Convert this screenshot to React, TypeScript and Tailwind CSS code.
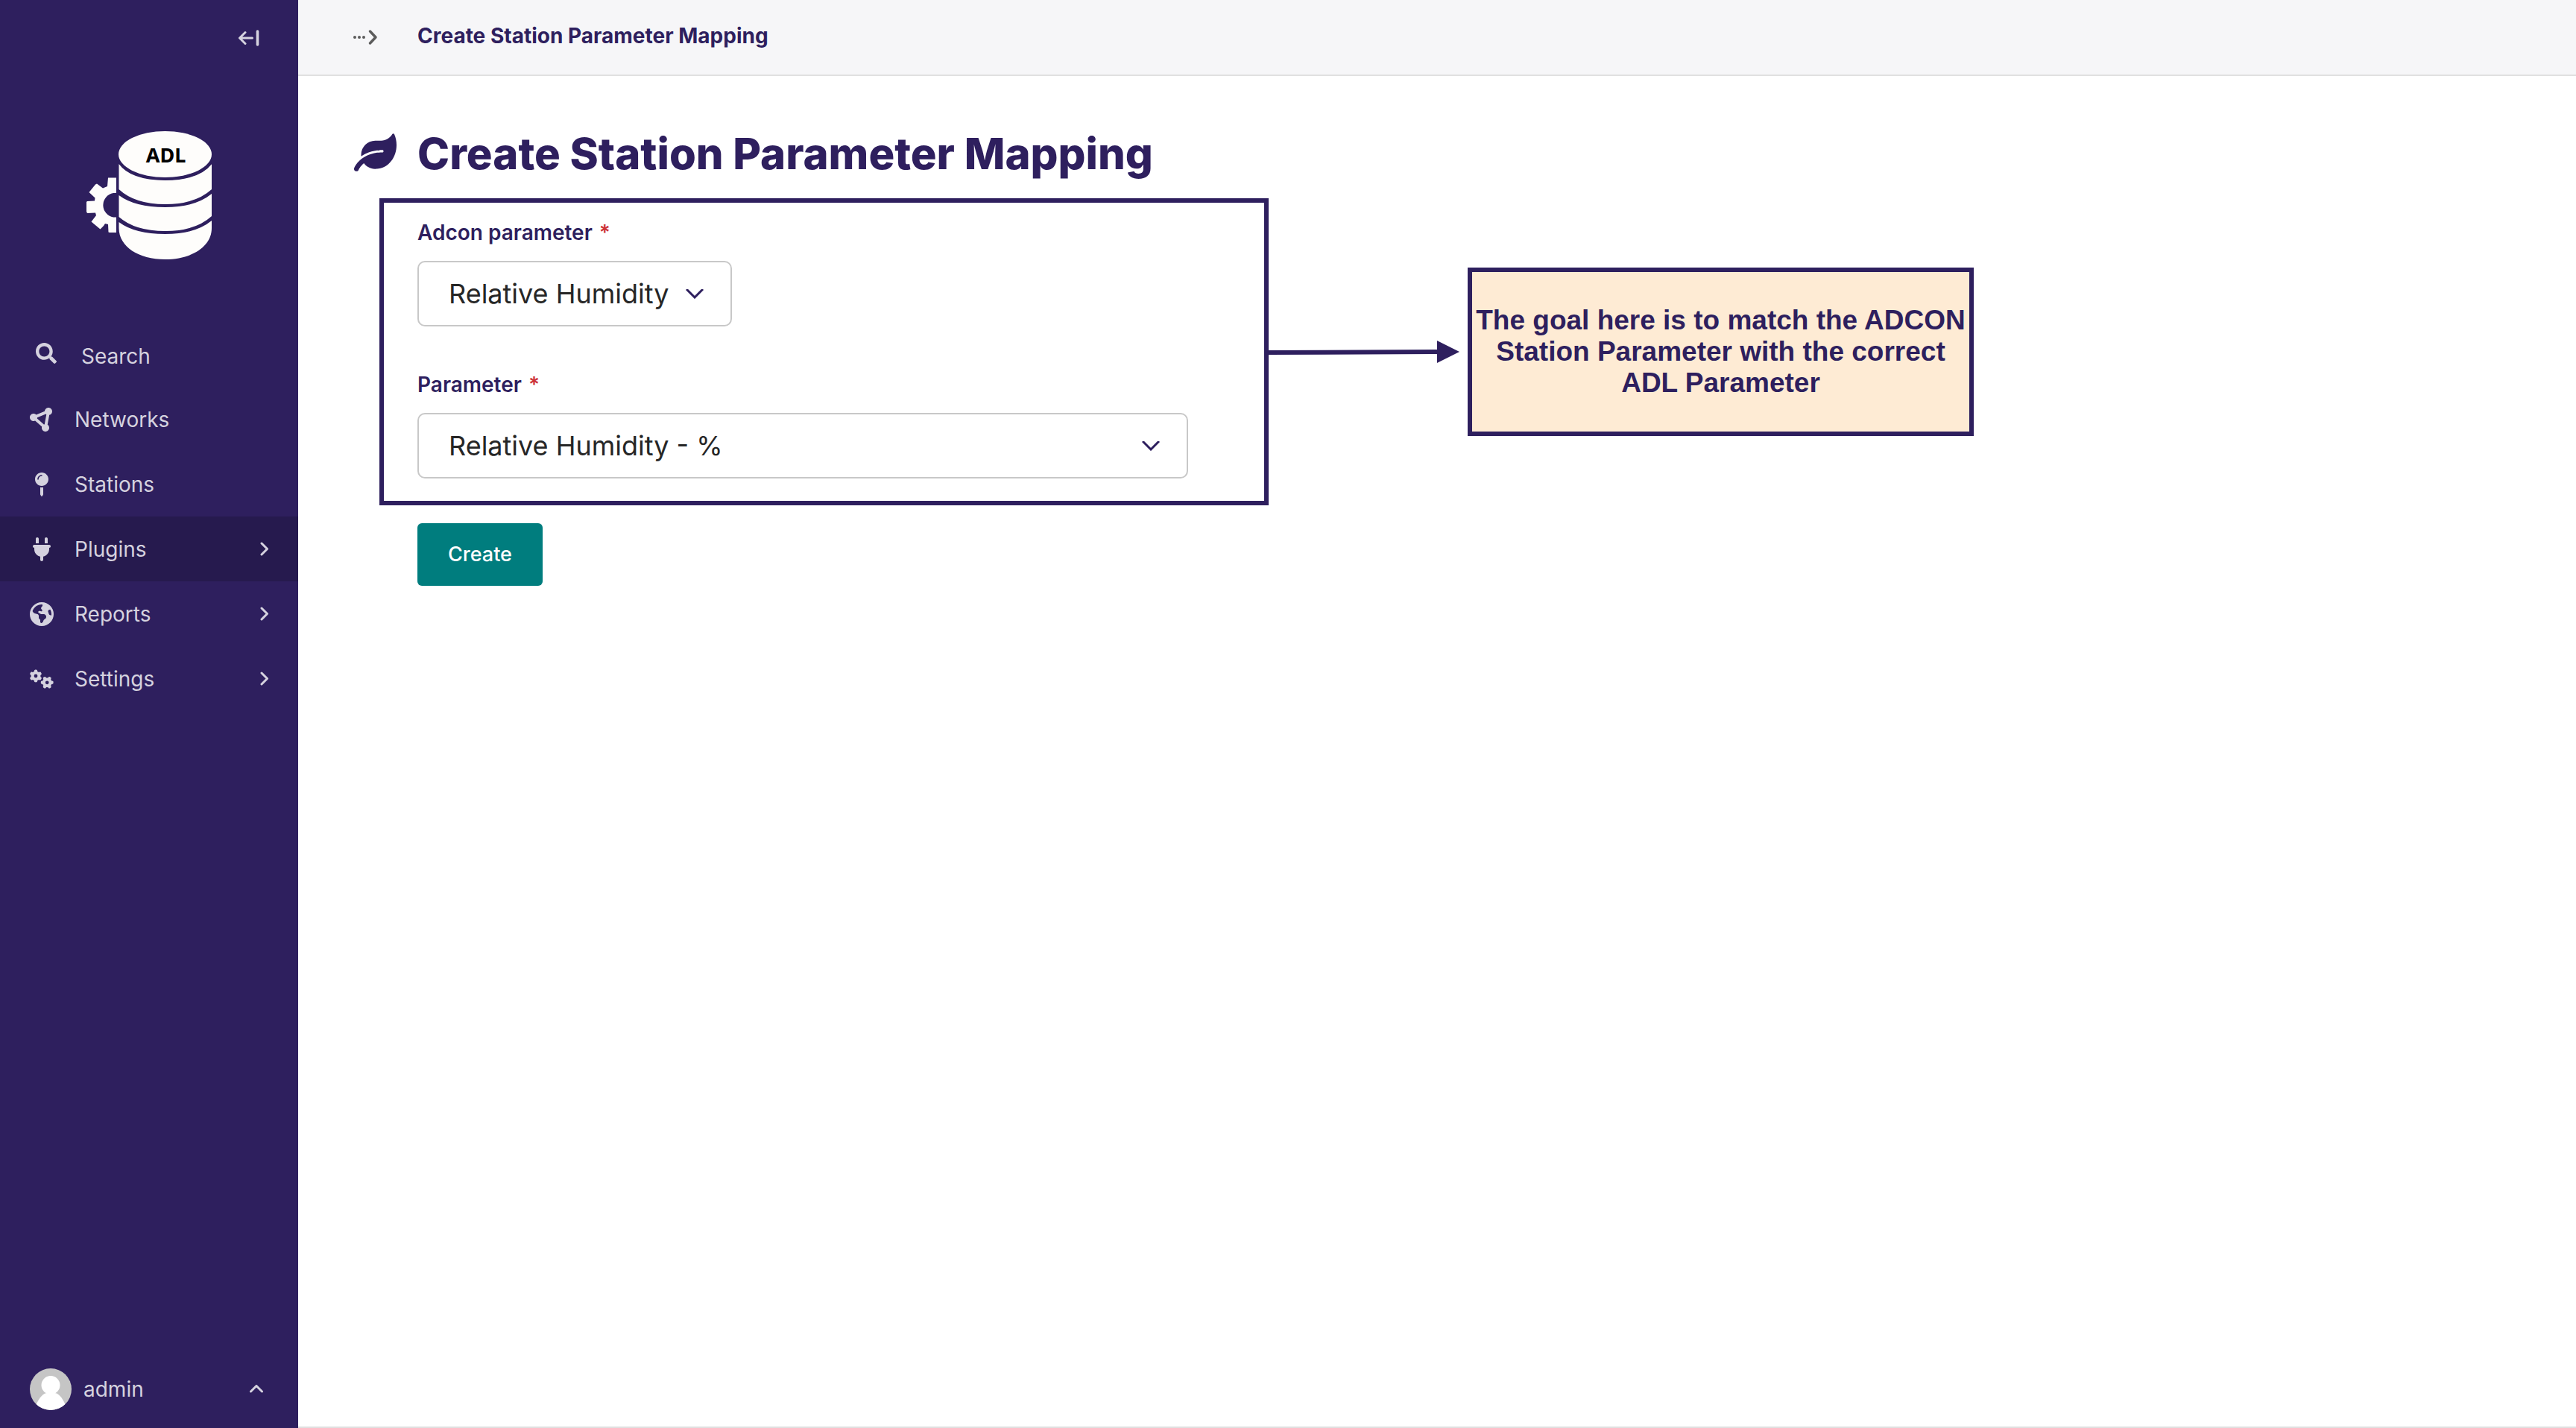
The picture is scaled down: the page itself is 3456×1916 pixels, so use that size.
import type { ReactNode } from 'react';
import {
  FaSearch,
  FaMapPin,
  FaLeaf,
} from 'react-icons/fa';
import {
  FaCircleNodes,
  FaPlug,
  FaEarthAmericas,
  FaGears,
} from 'react-icons/fa6';

function Logo() {
  return (
    <svg viewBox="116 176 168 172" className="ml-[116px] block h-[172px] w-[168px]" role="img" aria-label="ADL">
      <g fill="#fefdfb">
        <ellipse cx="221.500" cy="207" rx="62.500" ry="31" />
        <path d="M159.500 220 Q175 241.500 221.500 242 Q268 241.500 284 220 V254 Q262 274 221.500 274 Q181 274 159.500 254 Z" />
        <path d="M159.500 262 Q181 278 221.500 278 Q262 278 284 260 V290 Q262 310 221.500 310 Q181 310 159.500 291 Z" />
        <path d="M159.500 298 Q181 314 221.500 314 Q262 314 284 296 V306 C284 331 257 348 221.500 348 C186 348 159.500 331 159.500 306 Z" />
        <path d="M145 238.500 H156 V259 H152 A16.500 16.500 0 0 0 152 291.500 H156 V312 H147 L145.500 311.500 L145 301 L141 300 L139 303 L134.500 307.500 L122.500 297.500 L129 289 L128 285.500 L117 286 L116 284 V271 L117 270 L127 269.500 L127.500 265.500 L119.500 258 L128 247.500 L130 246.500 L138 252.500 L144 250 Z" />
      </g>
      <path d="M158 215 Q175 240 221.500 240 Q268 240 286 215" fill="none" stroke="#2e1f5e" strokeWidth="3" />
      <text x="222.500" y="218" textAnchor="middle" fontFamily="'Noto Sans', sans-serif" fontWeight="700" fontSize="27" fill="#000">ADL</text>
    </svg>
  );
}

function ChevronRight() {
  return (
    <svg viewBox="0 0 12 20" className="ml-auto mr-[39px] h-5 w-3" fill="none" stroke="currentColor" strokeWidth="3" strokeLinecap="round" strokeLinejoin="round" aria-hidden="true">
      <path d="M2 2 L9.500 9.500 L2 17" />
    </svg>
  );
}

function NavItem({ icon, label, expandable, active }: { icon: ReactNode; label: string; expandable?: boolean; active?: boolean }) {
  const className = `flex h-[87px] w-full items-center pl-10 text-left ${active ? 'bg-[#261a4e]' : ''}`;
  const content = (
    <>
      <span className="flex w-[60px] items-center text-[32px]"><span className="flex w-8 justify-center">{icon}</span></span>
      <span>{label}</span>
      {expandable && <ChevronRight />}
    </>
  );
  return (
    <li>
      {expandable ? <button type="button" className={className}>{content}</button> : <a href="#" className={className}>{content}</a>}
    </li>
  );
}

function Sidebar() {
  return (
    <aside className="flex w-[400px] shrink-0 flex-col bg-[#2e1f5e] text-[28px] leading-9 text-[#d5d2df]">
      <button type="button" aria-label="Collapse sidebar" className="mr-[52px] mt-10 self-end">
        <svg viewBox="0 0 28 22" className="h-[22px] w-7" fill="none" stroke="currentColor" strokeLinecap="round" strokeLinejoin="round" aria-hidden="true">
          <path d="M18.500 11 H2 M9 3.500 L1.500 11 L9 18.500" strokeWidth="3" />
          <path d="M25.500 2 V20" strokeWidth="3.600" />
        </svg>
      </button>
      <a href="#" className="mt-[114px]"><Logo /></a>
      <nav className="mt-[84px]">
        <button type="button" className="flex h-[87px] w-full items-center pl-12">
          <FaSearch className="mb-1 size-7" />
          <span className="ml-[33px] mt-1">Search</span>
        </button>
        <ul>
          <NavItem icon={<FaCircleNodes />} label="Networks" />
          <NavItem icon={<FaMapPin />} label="Stations" />
          <NavItem icon={<FaPlug />} label="Plugins" expandable active />
          <NavItem icon={<FaEarthAmericas />} label="Reports" expandable />
          <NavItem icon={<FaGears />} label="Settings" expandable />
        </ul>
      </nav>
      <button type="button" className="mb-6 mt-auto flex items-center pl-10">
        <svg viewBox="0 0 56 56" className="size-14 rounded-full bg-[#c5c5c5]" fill="#fff" aria-hidden="true">
          <circle cx="28" cy="22.500" r="12.500" />
          <path d="M8 50 C13 38 19 33 23 33 H33 C38 33 44 39 48 50 V56 H8 Z" />
        </svg>
        <span className="ml-4">admin</span>
        <svg viewBox="0 0 20 12" className="ml-auto mr-[46px] h-3 w-5" fill="none" stroke="currentColor" strokeWidth="3" strokeLinecap="round" strokeLinejoin="round" aria-hidden="true">
          <path d="M2.500 9 L10 1.500 L17.500 9" />
        </svg>
      </button>
    </aside>
  );
}

function SelectField({ id, label, value, wide }: { id: string; label: string; value: string; wide?: boolean }) {
  return (
    <div className="flex flex-col items-start">
      <label htmlFor={id} className="text-[28px] font-semibold leading-8 text-[#2e1f5e]">
        {label} <span className="ml-0.5 text-[#cd3238]">*</span>
      </label>
      <div className={`relative mt-[22px] ${wide ? 'w-[1034px]' : ''}`}>
        <select id={id} className="h-[88px] w-full appearance-none rounded-[10px] border-2 border-[#c8c8c8] bg-white pl-10 pr-[82px] text-[36px] text-[#262626]">
          <option>{value}</option>
        </select>
        <svg viewBox="0 0 24 13" className="pointer-events-none absolute right-[38px] top-[38px] h-[13px] w-6" fill="none" stroke="#2e1f5e" strokeWidth="3" aria-hidden="true">
          <path d="M1 0 L12 11 L23 0" />
        </svg>
      </div>
    </div>
  );
}

function Arrow() {
  return (
    <svg viewBox="0 0 256 30" className="h-[30px] w-64 shrink-0" fill="#2e1f5e" aria-hidden="true">
      <path d="M0 13 L226 12 V0 L256 15 L226 30 V18 L0 19 Z" />
    </svg>
  );
}

export default function App() {
  return (
    <div className="flex min-h-screen bg-white font-[Inter,sans-serif]">
      <Sidebar />
      <main className="flex min-w-0 grow flex-col border-b-2 border-[#e0e0e0]">
        <header className="flex h-[102px] items-center border-b-2 border-[#e0e0e0] bg-[#f6f6f8] pl-[74px]">
          <button type="button" aria-label="Show breadcrumbs" className="w-[86px] text-[#5c5c5c]">
            <svg viewBox="0 0 32 20" className="h-5 w-8" fill="currentColor" aria-hidden="true">
              <circle cx="2" cy="10" r="2" />
              <circle cx="8" cy="10" r="2" />
              <circle cx="14" cy="10" r="2" />
              <path d="M22.500 2 L30 10 L22.500 18" fill="none" stroke="currentColor" strokeWidth="3.400" strokeLinecap="round" strokeLinejoin="round" />
            </svg>
          </button>
          <a href="#" className="mb-1 text-[28px] font-bold leading-9 text-[#2e1f5e]">Create Station Parameter Mapping</a>
        </header>
        <div className="mt-[68px] flex items-center pl-[75px] text-[#2e1f5e]">
          <FaLeaf className="mb-1 mr-7 size-[57px]" />
          <h1 className="text-[58px] font-extrabold leading-[72px]">Create Station Parameter Mapping</h1>
        </div>
        <form className="pl-[109px]">
          <div className="mt-6 flex items-center">
            <div className="flex h-[412px] w-[1193px] flex-col gap-[62px] border-[6px] border-[#2e1f5e] pl-[45px] pt-6">
              <SelectField id="adcon" label="Adcon parameter" value="Relative Humidity" />
              <SelectField id="parameter" label="Parameter" value="Relative Humidity - %" wide />
            </div>
            <Arrow />
            <p className="ml-[11px] flex h-[226px] w-[679px] items-center justify-center border-[6px] border-[#2e1f5e] bg-[#feebd4] text-center font-['Liberation_Sans',sans-serif] text-[37px] font-bold leading-[42px] text-[#2e1f5e]">
              The goal here is to match the ADCON Station Parameter with the correct ADL Parameter
            </p>
          </div>
          <button type="submit" className="ml-[51px] mt-6 h-[84px] rounded-md bg-[#007d7e] px-[41px] text-[27px] font-medium text-white">Create</button>
        </form>
      </main>
    </div>
  );
}
